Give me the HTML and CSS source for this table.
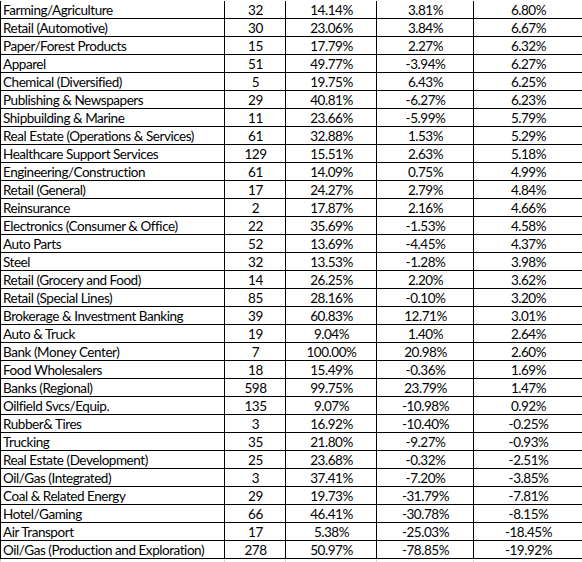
FILE: index.html
```html
<!DOCTYPE html>
<html lang="en">
<head>
    <meta charset="UTF-8">
    <meta name="viewport" content="width=device-width, initial-scale=1.0">
    <title>Industry returns</title>
    <link rel="stylesheet" href="styles.css">
</head>
<body>
    <table class="sheet">
        <colgroup>
            <col class="c-name">
            <col class="c-count">
            <col class="c-pct">
            <col class="c-chg">
            <col class="c-last">
        </colgroup>
        <tbody>
            <tr><td>Farming/Agriculture</td><td>32</td><td>14.14%</td><td>3.81%</td><td>6.80%</td></tr>
            <tr><td>Retail (Automotive)</td><td>30</td><td>23.06%</td><td>3.84%</td><td>6.67%</td></tr>
            <tr><td>Paper/Forest Products</td><td>15</td><td>17.79%</td><td>2.27%</td><td>6.32%</td></tr>
            <tr><td>Apparel</td><td>51</td><td>49.77%</td><td>-3.94%</td><td>6.27%</td></tr>
            <tr><td>Chemical (Diversified)</td><td>5</td><td>19.75%</td><td>6.43%</td><td>6.25%</td></tr>
            <tr><td>Publishing &amp; Newspapers</td><td>29</td><td>40.81%</td><td>-6.27%</td><td>6.23%</td></tr>
            <tr><td>Shipbuilding &amp; Marine</td><td>11</td><td>23.66%</td><td>-5.99%</td><td>5.79%</td></tr>
            <tr><td>Real Estate (Operations &amp; Services)</td><td>61</td><td>32.88%</td><td>1.53%</td><td>5.29%</td></tr>
            <tr><td>Healthcare Support Services</td><td>129</td><td>15.51%</td><td>2.63%</td><td>5.18%</td></tr>
            <tr><td>Engineering/Construction</td><td>61</td><td>14.09%</td><td>0.75%</td><td>4.99%</td></tr>
            <tr><td>Retail (General)</td><td>17</td><td>24.27%</td><td>2.79%</td><td>4.84%</td></tr>
            <tr><td>Reinsurance</td><td>2</td><td>17.87%</td><td>2.16%</td><td>4.66%</td></tr>
            <tr><td>Electronics (Consumer &amp; Office)</td><td>22</td><td>35.69%</td><td>-1.53%</td><td>4.58%</td></tr>
            <tr><td>Auto Parts</td><td>52</td><td>13.69%</td><td>-4.45%</td><td>4.37%</td></tr>
            <tr><td>Steel</td><td>32</td><td>13.53%</td><td>-1.28%</td><td>3.98%</td></tr>
            <tr><td>Retail (Grocery and Food)</td><td>14</td><td>26.25%</td><td>2.20%</td><td>3.62%</td></tr>
            <tr><td>Retail (Special Lines)</td><td>85</td><td>28.16%</td><td>-0.10%</td><td>3.20%</td></tr>
            <tr><td>Brokerage &amp; Investment Banking</td><td>39</td><td>60.83%</td><td>12.71%</td><td>3.01%</td></tr>
            <tr><td>Auto &amp; Truck</td><td>19</td><td>9.04%</td><td>1.40%</td><td>2.64%</td></tr>
            <tr><td>Bank (Money Center)</td><td>7</td><td>100.00%</td><td>20.98%</td><td>2.60%</td></tr>
            <tr><td>Food Wholesalers</td><td>18</td><td>15.49%</td><td>-0.36%</td><td>1.69%</td></tr>
            <tr><td>Banks (Regional)</td><td>598</td><td>99.75%</td><td>23.79%</td><td>1.47%</td></tr>
            <tr><td>Oilfield Svcs/Equip.</td><td>135</td><td>9.07%</td><td>-10.98%</td><td>0.92%</td></tr>
            <tr><td>Rubber&amp; Tires</td><td>3</td><td>16.92%</td><td>-10.40%</td><td>-0.25%</td></tr>
            <tr><td>Trucking</td><td>35</td><td>21.80%</td><td>-9.27%</td><td>-0.93%</td></tr>
            <tr><td>Real Estate (Development)</td><td>25</td><td>23.68%</td><td>-0.32%</td><td>-2.51%</td></tr>
            <tr><td>Oil/Gas (Integrated)</td><td>3</td><td>37.41%</td><td>-7.20%</td><td>-3.85%</td></tr>
            <tr><td>Coal &amp; Related Energy</td><td>29</td><td>19.73%</td><td>-31.79%</td><td>-7.81%</td></tr>
            <tr><td>Hotel/Gaming</td><td>66</td><td>46.41%</td><td>-30.78%</td><td>-8.15%</td></tr>
            <tr><td>Air Transport</td><td>17</td><td>5.38%</td><td>-25.03%</td><td>-18.45%</td></tr>
            <tr><td>Oil/Gas (Production and Exploration)</td><td>278</td><td>50.97%</td><td>-78.85%</td><td>-19.92%</td></tr>
            <tr class="gridline"><td></td><td></td><td></td><td></td><td></td></tr>
        </tbody>
    </table>
</body>
</html>
```

FILE: styles.css
```css
html, body {
    margin: 0;
    padding: 0;
    background-color: #ffffff;
    overflow: hidden;
}
.sheet {
    table-layout: fixed;
    border-collapse: separate;
    border-spacing: 0;
    width: 583px;
    margin-top: 1px;
    font-family: Lato, "Open Sans", sans-serif;
    font-size: 13.5px;
    letter-spacing: -0.45px;
    color: #000;
}
.c-name { width: 225px; }
.c-count { width: 61px; }
.c-pct { width: 91px; }
.c-chg { width: 97px; }
.c-last { width: 109px; }
.sheet td {
    box-sizing: border-box;
    height: 18px;
    padding: 1px 2px 0 3px;
    line-height: 16px;
    border-right: 1px solid #000;
    border-bottom: 1px solid #000;
    text-align: center;
    white-space: nowrap;
    overflow: hidden;
}
.sheet td:first-child {
    border-left: 1px solid #000;
    text-align: left;
    padding-left: 2px;
}
.sheet tr.gridline td {
    border-bottom: none;
    border-right-color: #d4d4d4;
    height: 8px;
}
.sheet tr.gridline td:first-child {
    border-left-color: #d4d4d4;
}
```
